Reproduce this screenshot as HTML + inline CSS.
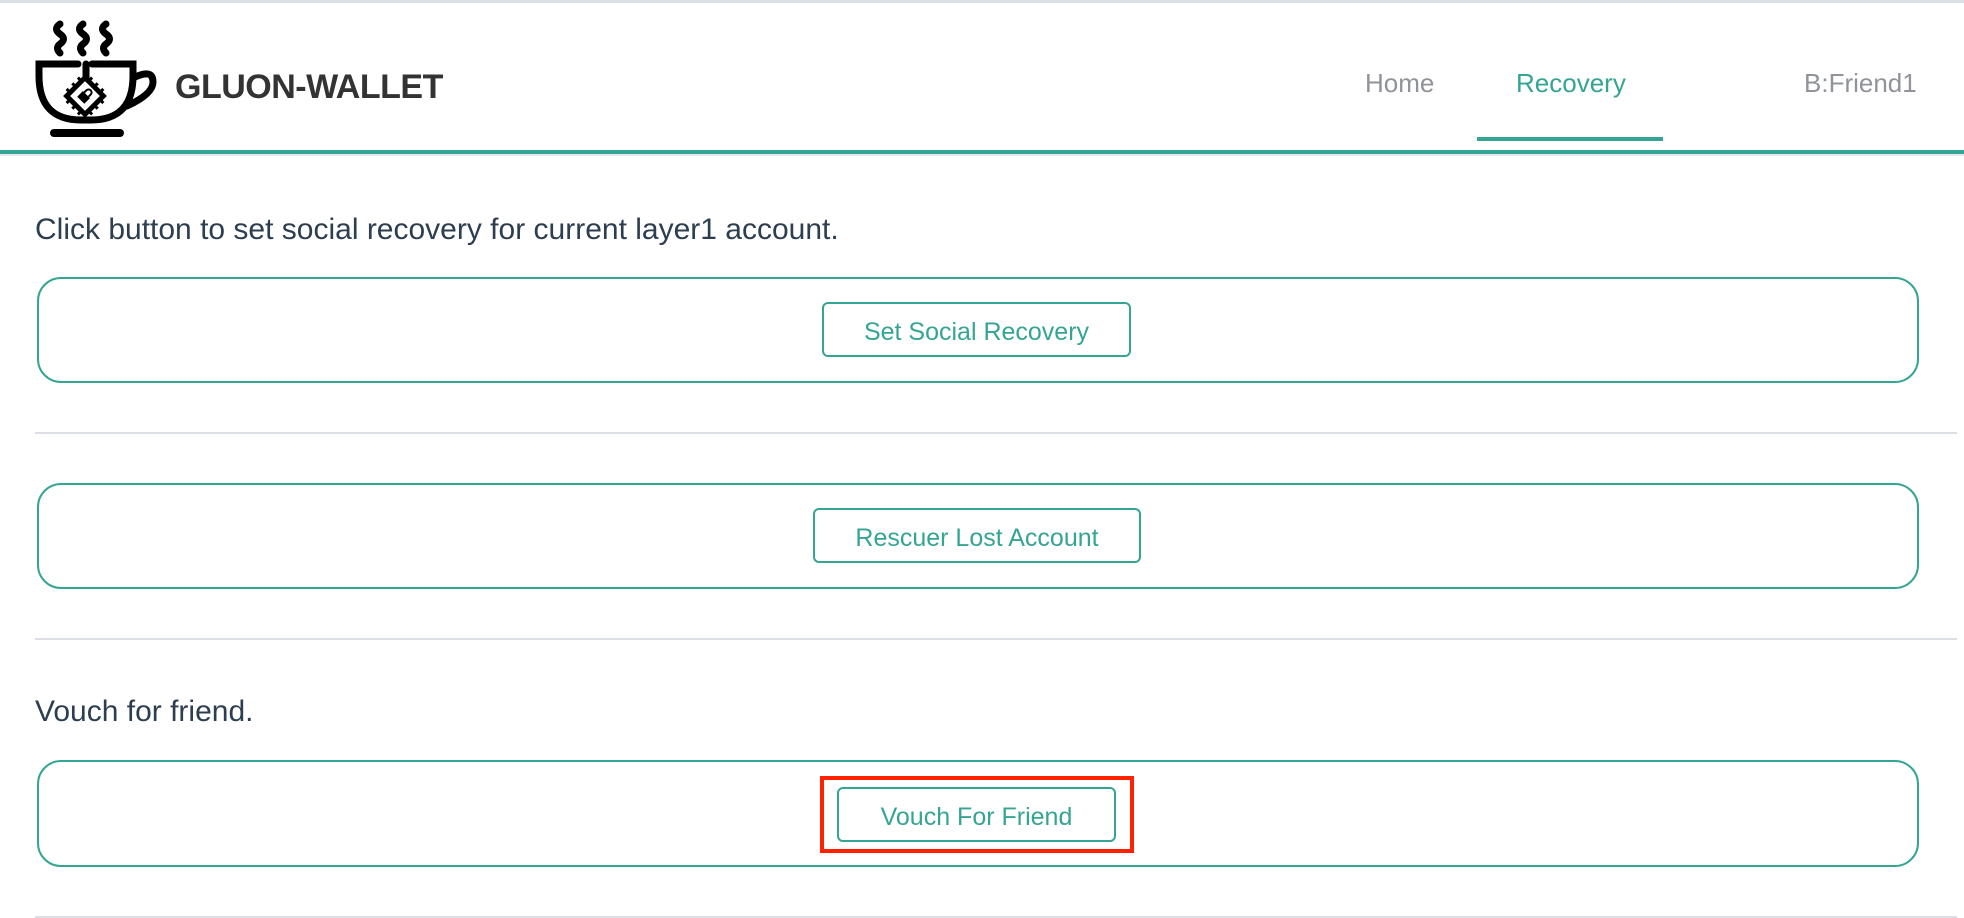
<!DOCTYPE html>
<html><head><meta charset="utf-8"><style>
*{margin:0;padding:0;box-sizing:border-box}
body{width:1964px;height:918px;background:#fff;font-family:"Liberation Sans",sans-serif;position:relative;overflow:hidden;color:#2c3e50}
.abs{position:absolute}
.topline{left:0;top:0;width:1964px;height:3px;background:#dcdfe6}
.hline{left:0;top:150px;width:1964px;height:4px;background:#35a593}
.hline2{left:0;top:154px;width:1964px;height:2px;background:#e4e7ed}
.title{left:175px;top:68px;font-size:34px;font-weight:bold;color:#333;letter-spacing:-0.5px}
.nav{top:68px;font-size:26px;color:#909399}
.box{left:37px;width:1882px;border:2px solid #35a593;border-radius:24px}
.btn{border:2px solid #35a593;border-radius:6px;color:#35a593;font-size:25px;display:flex;align-items:center;justify-content:center;padding-top:5px}
.div{left:35px;width:1922px;height:2px;background:#dcdfe6}
.txt{left:35px;font-size:30px;color:#2c3e50}
</style></head><body>
<div class="abs topline"></div>
<svg class="abs" style="left:30px;top:18px" width="130" height="120" viewBox="0 0 130 120">
 <g fill="none" stroke="#000" stroke-width="7" stroke-linecap="round">
  <path d="M30 6 q-7 5 0 10 q7 5 0 10 q-5 4 0 9"/>
  <path d="M53 6 q-7 5 0 10 q7 5 0 10 q-5 4 0 9"/>
  <path d="M76 6 q-7 5 0 10 q7 5 0 10 q-5 4 0 9"/>
  <path d="M48 46 H9 v12 q0 44 42 44 h10 q42 0 42 -44 v-12 H62"/>
  <path d="M103 60 q20 -10 20 4 q0 12 -26 24"/>
  <path d="M24 115 H90" stroke-width="8"/>
  <path d="M56 46 v14"/>
 </g>
 <g transform="translate(55,78) rotate(45)">
  <rect x="-13" y="-13" width="26" height="26" fill="none" stroke="#000" stroke-width="5"/>
  <g stroke="#000" stroke-width="3">
   <path d="M-8 -13v-5M0 -13v-5M8 -13v-5M-8 13v5M0 13v5M8 13v5M-13 -8h-5M-13 0h-5M-13 8h-5M13 -8h5M13 0h5M13 8h5"/>
  </g>
  <rect x="-5" y="-2" width="10" height="8" fill="#000"/>
  <path d="M-3 -2 v-3 a3 3 0 0 1 6 0 v3" fill="none" stroke="#000" stroke-width="2"/>
 </g>
</svg>
<div class="abs title">GLUON-WALLET</div>
<div class="abs nav" style="left:1365px">Home</div>
<div class="abs nav" style="left:1516px;color:#35a593">Recovery</div>
<div class="abs" style="left:1477px;top:137px;width:186px;height:4px;background:#35a593"></div>
<div class="abs nav" style="left:1804px">B:Friend1</div>
<div class="abs hline"></div><div class="abs hline2"></div>

<div class="abs txt" style="top:213px">Click button to set social recovery for current layer1 account.</div>
<div class="abs box" style="top:277px;height:106px"></div>
<div class="abs btn" style="left:822px;top:302px;width:309px;height:55px">Set Social Recovery</div>
<div class="abs div" style="top:432px"></div>

<div class="abs box" style="top:483px;height:106px"></div>
<div class="abs btn" style="left:813px;top:508px;width:328px;height:55px">Rescuer Lost Account</div>
<div class="abs div" style="top:638px"></div>

<div class="abs txt" style="top:695px">Vouch for friend.</div>
<div class="abs box" style="top:760px;height:107px"></div>
<div class="abs btn" style="left:837px;top:787px;width:279px;height:55px">Vouch For Friend</div>
<div class="abs" style="left:820px;top:776px;width:314px;height:77px;border:4px solid #ff2200"></div>
<div class="abs div" style="top:916px"></div>
</body></html>
